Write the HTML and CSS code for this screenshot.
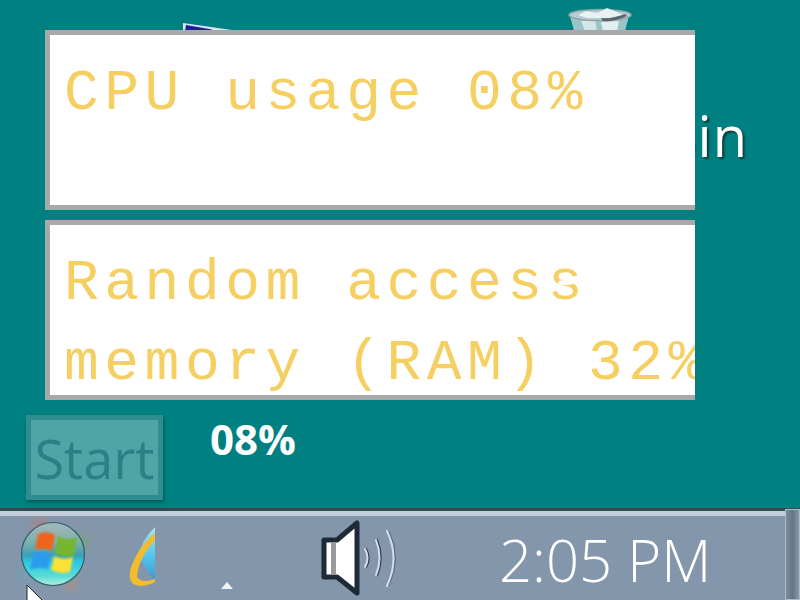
FILE: index.html
```html
<!DOCTYPE html>
<html lang="en">
<head>
    <meta charset="UTF-8">
    <title>CPU and RAM usage</title>
    <link rel="stylesheet" href="styles.css">
</head>
<body>

    <div class="desktop">
        <!-- Desktop icons behind the panels -->
        <svg class="computer-icon" width="52" height="8" viewBox="0 0 52 8">
            <polygon points="1,0 50,7 50,8 1,8" fill="#d8e4ef"/>
            <polygon points="4,2 30,6.5 30,8 3,8" fill="#1c1c9c"/>
        </svg>
        <svg class="bin-icon" width="66" height="24" viewBox="0 0 66 24">
            <path d="M3 9 L7 24 H58 L62 9 Z" fill="#9cc4c8"/>
            <path d="M14 14 L18 24 H30 L28 13 Z" fill="#d4e6ea"/>
            <path d="M34 15 L36 24 H50 L52 14 Z" fill="#e2eef1"/>
            <ellipse cx="33" cy="8" rx="31" ry="5.5" fill="#b7cdd2" stroke="#8fa5aa" stroke-width="1.5"/>
            <path d="M11 8 L19 4 L30 6 L40 1 L50 5 L56 8 L42 11 L20 11 Z" fill="#e8f1f4"/>
            <path d="M34 11 Q46 12 58 7 L60 9 Q48 15 36 14 Z" fill="#59666c"/>
        </svg>
        <div class="bin-label">Recycle Bin</div>

        <div class="panel">CPU usage 08%</div>
        <div class="panel">Random access
memory (RAM) 32%<span class="speck speck-one"></span><span class="speck speck-two"></span></div>

        <div class="controls">
            <button class="start-btn">Start</button>
            <div class="percent">08%</div>
        </div>
    </div>

    <!-- Taskbar -->
    <div class="taskbar">
        <svg class="orb" width="72" height="72" viewBox="0 0 72 72">
            <defs>
                <linearGradient id="orbFill" x1="0" y1="0" x2="0" y2="1">
                    <stop offset="0" stop-color="#a4b6ba"/>
                    <stop offset="0.3" stop-color="#7fb2ae"/>
                    <stop offset="0.52" stop-color="#3f9fb4"/>
                    <stop offset="0.62" stop-color="#2cc6e2"/>
                    <stop offset="0.85" stop-color="#58dcd8"/>
                    <stop offset="1" stop-color="#b4efd8"/>
                </linearGradient>
                <linearGradient id="ieFill" x1="0" y1="0" x2="0" y2="1">
                    <stop offset="0" stop-color="#a8e6ee"/>
                    <stop offset="0.5" stop-color="#58c8ee"/>
                    <stop offset="1" stop-color="#3c94d8"/>
                </linearGradient>
                <filter id="soft" x="-20%" y="-20%" width="140%" height="140%"><feGaussianBlur stdDeviation="1.2"/></filter>
                <filter id="glow" x="-150%" y="-150%" width="400%" height="400%"><feGaussianBlur stdDeviation="4.5"/></filter>
            </defs>
            <circle cx="24" cy="10" r="8" fill="#e8603c" opacity="0.5" filter="url(#glow)"/>
            <circle cx="66" cy="24" r="6" fill="#6fb04a" opacity="0.6" filter="url(#glow)"/>
            <circle cx="54" cy="66" r="5" fill="#e08a60" opacity="0.6" filter="url(#glow)"/>
            <circle cx="8" cy="56" r="5" fill="#40c0c0" opacity="0.5" filter="url(#glow)"/>
            <circle cx="36" cy="36" r="31.5" fill="url(#orbFill)" stroke="#2e5f6c" stroke-width="1.2"/>
            <g filter="url(#soft)">
                <path d="M21 16 Q30 12 38 17 L35 33 Q27 29 18 32 Z" fill="#f0641e"/>
                <path d="M41 18 Q50 24 60 19 L57 37 Q47 41 38 35 Z" fill="#74b62e"/>
                <path d="M16 35 Q26 32 34 36 L31 51 Q22 48 13 52 Z" fill="#2c9cee"/>
                <path d="M37 38 Q46 43 56 39 L53 54 Q43 57 34 52 Z" fill="#fbe036"/>
            </g>
        </svg>

        <svg class="ie-icon" width="28" height="61" viewBox="0 0 28 61">
            <path d="M27 0 Q14 12 10 30 L27 54 Z" fill="url(#ieFill)"/>
            <path d="M27 6 Q8 22 2 44 Q0 58 12 59 Q20 59 27 55 L27 52 Q14 57 9 50 Q10 32 27 13 Z" fill="#f2bc2e"/>
        </svg>

        <svg class="tray-arrow" width="14" height="8" viewBox="0 0 14 8">
            <polygon points="7,0 13,7 1,7" fill="#eef3fa"/>
        </svg>

        <svg class="speaker" width="80" height="76" viewBox="0 0 80 76">
            <path d="M3 20 H16 L36 3 V73 L16 57 H3 Z" fill="#fff" stroke="#1f2a38" stroke-width="5" stroke-linejoin="round"/>
            <rect x="10" y="22" width="5" height="33" fill="#9a9a9a"/>
            <g fill="none" stroke="#35435a" stroke-width="2.5" stroke-linecap="round">
                <path d="M45 29 Q50 38 45 47"/>
                <path d="M56 20 Q63 38 56 55"/>
            </g>
            <g fill="none" stroke="#d4deea" stroke-width="2" stroke-linecap="round">
                <path d="M44 29 Q49 38 44 47"/>
                <path d="M55 20 Q62 38 55 55"/>
                <path d="M66 11 Q79 38 66 66"/>
            </g>
            <path d="M68 11 Q81 38 68 66" fill="none" stroke="#5a6a80" stroke-width="1"/>
        </svg>

        <div class="clock">2:05 PM</div>
        <div class="tray-handle"></div>

        <!-- Mouse pointer sits at the bottom edge -->
        <svg class="pointer" width="17" height="16" viewBox="0 0 17 16">
            <polygon points="1,0 16,15 16,16 1,16" fill="#fff" stroke="#222" stroke-width="1"/>
        </svg>
    </div>

</body>
</html>
```

FILE: styles.css
```css
html, body {
    margin: 0;
    padding: 0;
    height: 100%;
    overflow: hidden;
}

body {
    width: 800px;
    height: 600px;
    display: flex;
    flex-direction: column;
    background-color: #008080;
    font-family: "Open Sans", sans-serif;
}

.desktop {
    position: relative;
    height: 508px;
    padding-top: 30px;
    box-sizing: border-box;
}

.computer-icon {
    position: absolute;
    left: 182px;
    top: 23px;
}

.bin-icon {
    position: absolute;
    left: 567px;
    top: 7px;
}

.bin-label {
    position: absolute;
    right: 52px;
    top: 98px;
    font-size: 56px;
    letter-spacing: 1px;
    line-height: 74px;
    color: #fff;
    text-shadow: 2px 2px 2px #063c3c;
    white-space: nowrap;
}

.panel {
    position: relative;
    width: 650px;
    height: 180px;
    box-sizing: border-box;
    margin: 0 0 10px 45px;
    padding: 19px 0 0 14px;
    border: 5px solid #a9a9a9;
    border-right: 0;
    background-color: #fff;
    color: #f6cf62;
    font-family: "Liberation Mono", monospace;
    font-size: 58px;
    letter-spacing: 5.5px;
    line-height: 80px;
    white-space: pre;
    overflow: hidden;
}

/* White smudges over the last two letters of "access" */
.speck {
    position: absolute;
    background-color: #fff;
    border-radius: 50%;
}

.speck-one {
    left: 472px;
    top: 50px;
    width: 14px;
    height: 7px;
}

.speck-two {
    left: 508px;
    top: 55px;
    width: 16px;
    height: 5px;
}

.controls {
    display: flex;
    align-items: flex-start;
    margin: 15px 0 0 26px;
}

.start-btn {
    width: 137px;
    height: 85px;
    box-sizing: border-box;
    padding: 1px 0 0;
    border: 5px solid #2f8d90;
    background-color: #4fa5a6;
    background-image:
        radial-gradient(circle at 0 0, #6fc0c4 0, transparent 8px),
        radial-gradient(circle at 100% 0, #6fc0c4 0, transparent 8px),
        radial-gradient(circle at 0 100%, #6fc0c4 0, transparent 8px),
        radial-gradient(circle at 100% 100%, #6fc0c4 0, transparent 8px);
    background-origin: border-box;
    box-shadow: 1px 2px 3px rgba(0, 60, 60, 0.6);
    color: #2c7f86;
    font-family: "Open Sans", sans-serif;
    font-size: 54px;
    line-height: 75px;
}

.percent {
    margin: -1px 0 0 47px;
    font-size: 42px;
    font-weight: 700;
    line-height: 50px;
    color: #fff;
}

.taskbar {
    position: relative;
    flex: 1;
    border-top: 3px solid #37474f;
    box-shadow: inset 0 5px 0 #c5cfdc;
    background-color: #8496ab;
}

.orb {
    position: absolute;
    left: 17px;
    top: 7px;
    overflow: visible;
}

.ie-icon {
    position: absolute;
    left: 128px;
    top: 16px;
}

.tray-arrow {
    position: absolute;
    left: 220px;
    top: 71px;
}

.speaker {
    position: absolute;
    left: 321px;
    top: 9px;
}

.clock {
    position: absolute;
    left: 499px;
    top: 11px;
    font-size: 58px;
    font-weight: 300;
    line-height: 76px;
    color: #fff;
    white-space: nowrap;
}

.tray-handle {
    position: absolute;
    right: 0;
    top: -2px;
    bottom: 0;
    width: 13px;
    border: 1px solid #aeb9c7;
    background-image: linear-gradient(to right, #7d8b9d, #66748a 50%, #8896a8);
}

.pointer {
    position: absolute;
    left: 26px;
    top: 74px;
}
```
